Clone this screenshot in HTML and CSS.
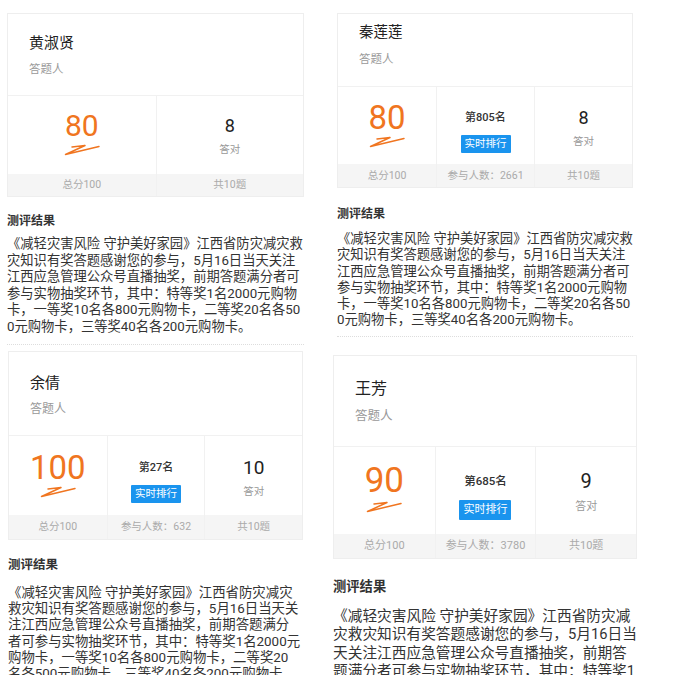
FILE: index.html
```html
<!DOCTYPE html>
<html lang="zh-CN">
<head>
  <meta charset="UTF-8">
  <meta name="viewport" content="width=device-width, initial-scale=1.0">
  <title>测评结果</title>
  <link rel="stylesheet" href="styles.css">
</head>
<body>
  <div class="collage">
    <div class="col">
      <!-- 黄淑贤 -->
      <section class="shot shot-a">
        <div class="card">
          <div class="card-head">
            <div class="name">黄淑贤</div>
            <div class="role">答题人</div>
          </div>
          <div class="stats">
            <div class="stat">
              <div class="stat-body">
                <div class="score">80</div>
                <svg class="mark" viewBox="0 0 36 12"><path d="M8 3 L21 1.5 L1.5 10.5 L35 2.5" /></svg>
              </div>
              <div class="stat-foot">总分100</div>
            </div>
            <div class="stat">
              <div class="stat-body">
                <div class="num">8</div>
                <div class="cap">答对</div>
              </div>
              <div class="stat-foot">共10题</div>
            </div>
          </div>
        </div>
        <div class="result">
          <h3>测评结果</h3>
          <p>《减轻灾害风险 守护美好家园》江西省防灾减灾救<br>灾知识有奖答题感谢您的参与，5月16日当天关注<br>江西应急管理公众号直播抽奖，前期答题满分者可<br>参与实物抽奖环节，其中：特等奖1名2000元购物<br>卡，一等奖10名各800元购物卡，二等奖20名各50<br>0元购物卡，三等奖40名各200元购物卡。</p>
        </div>
      </section>

      <!-- 余倩 -->
      <section class="shot shot-c">
        <div class="card">
          <div class="card-head">
            <div class="name">余倩</div>
            <div class="role">答题人</div>
          </div>
          <div class="stats">
            <div class="stat">
              <div class="stat-body">
                <div class="score">100</div>
                <svg class="mark" viewBox="0 0 36 12"><path d="M8 3 L21 1.5 L1.5 10.5 L35 2.5" /></svg>
              </div>
              <div class="stat-foot">总分100</div>
            </div>
            <div class="stat">
              <div class="stat-body">
                <div class="rank">第27名</div>
                <span class="live-btn">实时排行</span>
              </div>
              <div class="stat-foot">参与人数：632</div>
            </div>
            <div class="stat">
              <div class="stat-body">
                <div class="num">10</div>
                <div class="cap">答对</div>
              </div>
              <div class="stat-foot">共10题</div>
            </div>
          </div>
        </div>
        <div class="result">
          <h3>测评结果</h3>
          <p>《减轻灾害风险 守护美好家园》江西省防灾减灾<br>救灾知识有奖答题感谢您的参与，5月16日当天关<br>注江西应急管理公众号直播抽奖，前期答题满分<br>者可参与实物抽奖环节，其中：特等奖1名2000元<br>购物卡，一等奖10名各800元购物卡，二等奖20<br>名各500元购物卡，三等奖40名各200元购物卡。</p>
        </div>
      </section>
    </div>

    <div class="col">
      <!-- 秦莲莲 -->
      <section class="shot shot-b">
        <div class="card">
          <div class="card-head">
            <div class="name">秦莲莲</div>
            <div class="role">答题人</div>
          </div>
          <div class="stats">
            <div class="stat">
              <div class="stat-body">
                <div class="score">80</div>
                <svg class="mark" viewBox="0 0 36 12"><path d="M8 3 L21 1.5 L1.5 10.5 L35 2.5" /></svg>
              </div>
              <div class="stat-foot">总分100</div>
            </div>
            <div class="stat">
              <div class="stat-body">
                <div class="rank">第805名</div>
                <span class="live-btn">实时排行</span>
              </div>
              <div class="stat-foot">参与人数：2661</div>
            </div>
            <div class="stat">
              <div class="stat-body">
                <div class="num">8</div>
                <div class="cap">答对</div>
              </div>
              <div class="stat-foot">共10题</div>
            </div>
          </div>
        </div>
        <div class="result">
          <h3>测评结果</h3>
          <p>《减轻灾害风险 守护美好家园》江西省防灾减灾救<br>灾知识有奖答题感谢您的参与，5月16日当天关注<br>江西应急管理公众号直播抽奖，前期答题满分者可<br>参与实物抽奖环节，其中：特等奖1名2000元购物<br>卡，一等奖10名各800元购物卡，二等奖20名各50<br>0元购物卡，三等奖40名各200元购物卡。</p>
        </div>
      </section>

      <!-- 王芳 -->
      <section class="shot shot-d">
        <div class="card">
          <div class="card-head">
            <div class="name">王芳</div>
            <div class="role">答题人</div>
          </div>
          <div class="stats">
            <div class="stat">
              <div class="stat-body">
                <div class="score">90</div>
                <svg class="mark" viewBox="0 0 36 12"><path d="M8 3 L21 1.5 L1.5 10.5 L35 2.5" /></svg>
              </div>
              <div class="stat-foot">总分100</div>
            </div>
            <div class="stat">
              <div class="stat-body">
                <div class="rank">第685名</div>
                <span class="live-btn">实时排行</span>
              </div>
              <div class="stat-foot">参与人数：3780</div>
            </div>
            <div class="stat">
              <div class="stat-body">
                <div class="num">9</div>
                <div class="cap">答对</div>
              </div>
              <div class="stat-foot">共10题</div>
            </div>
          </div>
        </div>
        <div class="result">
          <h3>测评结果</h3>
          <p>《减轻灾害风险 守护美好家园》江西省防灾减<br>灾救灾知识有奖答题感谢您的参与，5月16日当<br>天关注江西应急管理公众号直播抽奖，前期答<br>题满分者可参与实物抽奖环节，其中：特等奖1</p>
        </div>
      </section>
    </div>
  </div>
</body>
</html>
```

FILE: styles.css
```css
* {
  box-sizing: border-box;
}

body {
  margin: 0;
  padding: 0;
  height: 694px;
  overflow: hidden;
  font-family: Roboto, "Noto Sans CJK SC", sans-serif;
  background-color: #fff;
  color: #333;
}

.collage {
  display: grid;
  grid-template-columns: 320px 374px;
}

.col {
  display: flex;
  flex-direction: column;
}

/* 每张截图的尺寸 */
.shot {
  --vlh: 34px;
  --btn-h: 18px;
  --role-mt: 8px;
  margin-left: var(--ml);
  margin-top: var(--mt);
  width: var(--w);
  overflow: hidden;
}

.shot-a {
  --ml: 7px; --mt: 13px; --w: 297px;
  --head: 82px; --nt: 19px; --stat: 78px; --st: 13px; --foot: 22px;
  --name-fs: 15px; --role-fs: 11.5px;
  --score-fs: 30px; --num-fs: 18px; --small-fs: 10.5px;
  --tt: 14px; --title-fs: 12px; --tg: 5px; --text-fs: 13.3px; --lh: 16.5px; --pb: 9px;
}

.shot-b {
  --ml: 17px; --mt: 13px; --w: 296px;
  --head: 73px; --nt: 9px; --stat: 77px; --st: 14px; --foot: 23px;
  --name-fs: 14.5px; --role-fs: 11.5px;
  --score-fs: 33px; --num-fs: 18px; --small-fs: 10.5px;
  --tt: 16px; --title-fs: 12px; --tg: 7px; --text-fs: 13.3px; --lh: 16.3px; --pb: 7px;
}

.shot-c {
  --ml: 8px; --mt: 6px; --w: 295px;
  --head: 84px; --nt: 21px; --stat: 79px; --st: 15px; --foot: 24px;
  --name-fs: 15px; --role-fs: 12px;
  --score-fs: 33px; --num-fs: 19px; --small-fs: 10.5px;
  --tt: 15px; --title-fs: 12.5px; --tg: 10px; --text-fs: 13.4px; --lh: 16.2px; --pb: 6px;
  height: 324px;
}

.shot-d {
  --ml: 13px; --mt: 18px; --w: 304px;
  --head: 91px; --nt: 23px; --stat: 87px; --st: 15px; --foot: 24px;
  --name-fs: 16px; --role-fs: 12.5px; --role-mt: 9px;
  --score-fs: 35px; --num-fs: 20px; --small-fs: 11px;
  --vlh: 38px; --btn-h: 20px;
  --tt: 18px; --title-fs: 13.3px; --tg: 10px; --text-fs: 14.7px; --lh: 18.5px; --pb: 6px;
  height: 320px;
}

/* 卡片 */
.card {
  border: 1px solid #eee;
  background-color: #fff;
}

.card-head {
  height: var(--head);
  padding: var(--nt) 0 0 21px;
  border-bottom: 1px solid #f1f1f1;
}

.name {
  font-size: var(--name-fs);
  line-height: 20px;
  color: #222;
}

.role {
  margin-top: var(--role-mt);
  font-size: var(--role-fs);
  line-height: 16px;
  color: #999;
}

.stats {
  display: grid;
  grid-auto-columns: 1fr;
  grid-auto-flow: column;
}

.stat + .stat {
  border-left: 1px solid #f1f1f1;
}

.stat-body {
  height: var(--stat);
  padding-top: var(--st);
  display: flex;
  flex-direction: column;
  align-items: center;
}

.stat-foot {
  height: var(--foot);
  line-height: var(--foot);
  background-color: #f5f5f5;
  text-align: center;
  font-size: var(--small-fs);
  color: #aaa;
}

.score {
  font-size: var(--score-fs);
  line-height: var(--vlh);
  color: #f07520;
}

.mark {
  width: 36px;
  height: 12px;
  margin-top: 1px;
}

.mark path {
  fill: none;
  stroke: #f07520;
  stroke-width: 1.5;
  stroke-linecap: round;
  stroke-linejoin: round;
}

.num {
  font-size: var(--num-fs);
  line-height: var(--vlh);
  color: #222;
}

.cap {
  margin-top: -1px;
  font-size: var(--small-fs);
  line-height: 16px;
  color: #999;
}

.rank {
  font-size: calc(var(--small-fs) + 0.5px);
  font-weight: 500;
  line-height: var(--vlh);
  color: #333;
}

.live-btn {
  height: var(--btn-h);
  line-height: var(--btn-h);
  padding: 0 4px;
  background-color: #1a94ee;
  color: #fff;
  font-size: var(--small-fs);
  border-radius: 1px;
}

/* 测评结果 */
.result {
  padding-top: var(--tt);
}

.result h3 {
  margin: 0;
  font-size: var(--title-fs);
  font-weight: bold;
  line-height: 20px;
  color: #333;
}

.result p {
  margin: var(--tg) 0 0;
  padding-bottom: var(--pb);
  font-size: var(--text-fs);
  line-height: var(--lh);
  white-space: nowrap;
  color: #333;
  border-bottom: 1px dotted #ddd;
}
```
